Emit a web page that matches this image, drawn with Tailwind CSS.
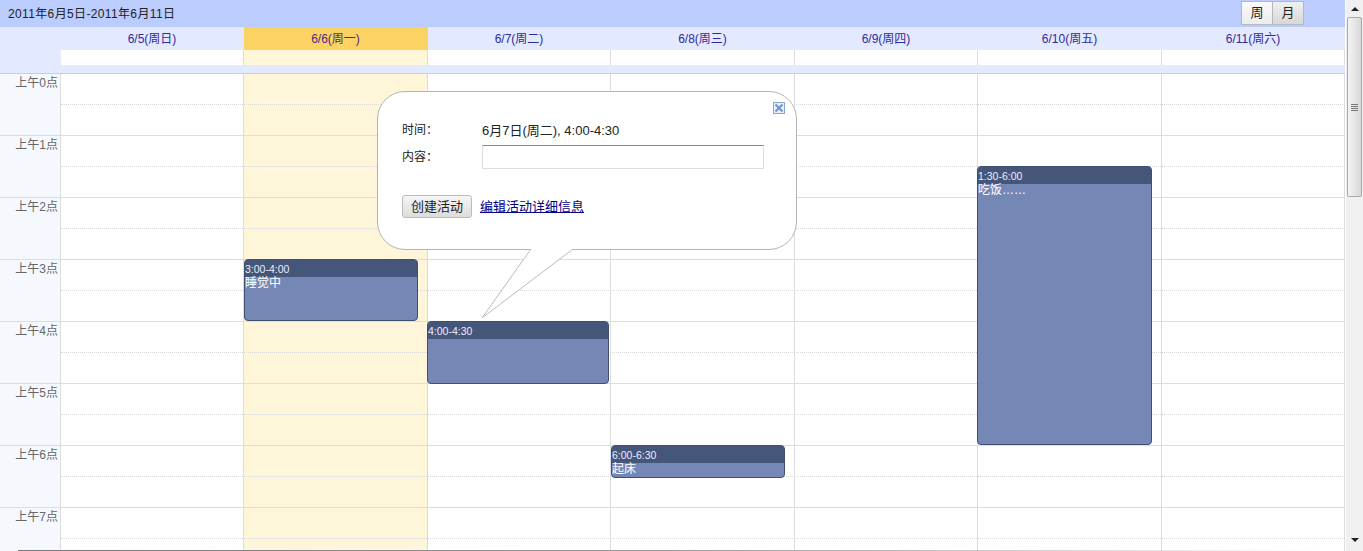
<!DOCTYPE html>
<html lang="zh-CN">
<head>
    <meta charset="UTF-8">
    <title>日历</title>
    <script src="https://cdn.jsdelivr.net/npm/@tailwindcss/browser@4"></script>
</head>
<body class="bg-white">
<div class="flex h-[551px] w-[1363px] overflow-hidden relative text-[12px] text-[#222] font-['Liberation_Sans','Noto_Sans_CJK_SC',sans-serif]">
    <main class="w-[1345px] flex flex-col">
        <!-- Toolbar -->
        <header class="h-[27px] bg-[#bbccff] flex items-center justify-between pl-2 pr-[41px]">
            <span class="tracking-[0.36px]">2011年6月5日-2011年6月11日</span>
            <div class="flex h-[24px] -mt-[2px] border border-[#b4b8c0] text-[13px]">
                <button class="w-[31px] bg-linear-to-b from-[#fafafa] to-[#ececec] border-r border-[#b4b8c0]">周</button>
                <button class="w-[30px] bg-linear-to-b from-[#f0f0f0] to-[#d8d8d8]">月</button>
            </div>
        </header>

        <!-- Day headers -->
        <div class="h-[23px] bg-[#e3e9ff] grid grid-cols-[61px_183px_184px_183px_184px_183px_184px_183px] items-stretch text-[#2f2a9c]">
            <div></div>
            <div class="flex items-center justify-center pr-px">6/5(周日)</div>
            <div class="flex items-center justify-center pr-px bg-[#fcd264] text-[#4a2a80]">6/6(周一)</div>
            <div class="flex items-center justify-center pr-px">6/7(周二)</div>
            <div class="flex items-center justify-center pr-px">6/8(周三)</div>
            <div class="flex items-center justify-center pr-px">6/9(周四)</div>
            <div class="flex items-center justify-center pr-px">6/10(周五)</div>
            <div class="flex items-center justify-center pr-px">6/11(周六)</div>
        </div>

        <!-- All day row -->
        <div class="h-[15px] bg-white grid grid-cols-[61px_183px_184px_183px_184px_183px_184px_183px]">
            <div class="bg-[#e3e9ff]"></div>
            <div class="border-r border-[#ddd]"></div>
            <div class="border-r border-[#e8dcae] bg-[#fff5d8]"></div>
            <div class="border-r border-[#ddd]"></div>
            <div class="border-r border-[#ddd]"></div>
            <div class="border-r border-[#ddd]"></div>
            <div class="border-r border-[#ddd]"></div>
            <div class="border-r border-[#ddd]"></div>
        </div>
        <div class="h-[9px] bg-[#e3e9ff] border-b border-[#c3cfe8]"></div>

        <!-- Time grid -->
        <div class="relative flex-1 overflow-hidden">
            <div class="absolute inset-0 grid grid-cols-[61px_183px_184px_183px_184px_183px_184px_183px]">
                <div class="bg-[#f5f8fc] border-r border-[#ddd]"></div>
                <div class="border-r border-[#ddd]"></div>
                <div class="border-r border-[#e8dcae] bg-[#fff5d8]"></div>
                <div class="border-r border-[#ddd]"></div>
                <div class="border-r border-[#ddd]"></div>
                <div class="border-r border-[#ddd]"></div>
                <div class="border-r border-[#ddd]"></div>
                <div class="border-r border-[#ddd]"></div>
            </div>

            <div class="relative text-[#666]">
                <div class="h-[62px] border-b border-[#ddd] flex"><div class="w-[58px] text-right leading-[19px]">上午0点</div><div class="flex-1 ml-[3px] h-[31px] border-b border-dotted border-[#d8d8d8]"></div></div>
                <div class="h-[62px] border-b border-[#ddd] flex"><div class="w-[58px] text-right leading-[19px]">上午1点</div><div class="flex-1 ml-[3px] h-[31px] border-b border-dotted border-[#d8d8d8]"></div></div>
                <div class="h-[62px] border-b border-[#ddd] flex"><div class="w-[58px] text-right leading-[19px]">上午2点</div><div class="flex-1 ml-[3px] h-[31px] border-b border-dotted border-[#d8d8d8]"></div></div>
                <div class="h-[62px] border-b border-[#ddd] flex"><div class="w-[58px] text-right leading-[19px]">上午3点</div><div class="flex-1 ml-[3px] h-[31px] border-b border-dotted border-[#d8d8d8]"></div></div>
                <div class="h-[62px] border-b border-[#ddd] flex"><div class="w-[58px] text-right leading-[19px]">上午4点</div><div class="flex-1 ml-[3px] h-[31px] border-b border-dotted border-[#d8d8d8]"></div></div>
                <div class="h-[62px] border-b border-[#ddd] flex"><div class="w-[58px] text-right leading-[19px]">上午5点</div><div class="flex-1 ml-[3px] h-[31px] border-b border-dotted border-[#d8d8d8]"></div></div>
                <div class="h-[62px] border-b border-[#ddd] flex"><div class="w-[58px] text-right leading-[19px]">上午6点</div><div class="flex-1 ml-[3px] h-[31px] border-b border-dotted border-[#d8d8d8]"></div></div>
                <div class="h-[62px] border-b border-[#ddd] flex"><div class="w-[58px] text-right leading-[19px]">上午7点</div><div class="flex-1 ml-[3px] h-[31px] border-b border-dotted border-[#d8d8d8]"></div></div>
            </div>

            <!-- Events -->
            <div class="absolute left-[244px] top-[185px] w-[174px] h-[62px] rounded-[4px] border border-[#3f4f72] bg-[#7487b5] text-white overflow-hidden">
                <div class="h-[17px] bg-[#44567a] text-[10.5px] leading-[19px] text-[#eef]">3:00-4:00</div>
                <div class="leading-[13px]">睡觉中</div>
            </div>
            <div class="absolute left-[427px] top-[247px] w-[182px] h-[63px] rounded-[4px] border border-[#3f4f72] bg-[#7487b5] text-white overflow-hidden">
                <div class="h-[17px] bg-[#44567a] text-[10.5px] leading-[19px] text-[#eef]">4:00-4:30</div>
            </div>
            <div class="absolute left-[611px] top-[371px] w-[174px] h-[33px] rounded-[4px] border border-[#3f4f72] bg-[#7487b5] text-white overflow-hidden">
                <div class="h-[17px] bg-[#44567a] text-[10.5px] leading-[19px] text-[#eef]">6:00-6:30</div>
                <div class="leading-[13px]">起床</div>
            </div>
            <div class="absolute left-[977px] top-[92px] w-[175px] h-[279px] rounded-[4px] border border-[#3f4f72] bg-[#7487b5] text-white overflow-hidden">
                <div class="h-[17px] bg-[#44567a] text-[10.5px] leading-[19px] text-[#eef]">1:30-6:00</div>
                <div class="leading-[13px]">吃饭……</div>
            </div>

            <!-- Popup bubble -->
            <div class="absolute left-[377px] top-[17px] w-[420px] h-[159px] rounded-[28px] border border-[#b4b4b4] bg-white pl-[24px] pt-[31px] text-[13px] text-[#222]">
                <svg class="absolute right-[11px] top-[10px] w-[12px] h-[12px]" viewBox="0 0 12 12">
                    <rect x="0.5" y="0.5" width="11" height="11" fill="#e8eefa" stroke="#8aa6d8"/>
                    <path d="M2.5 2.5l7 7M9.5 2.5l-7 7" stroke="#6f93d0" stroke-width="2"/>
                </svg>
                <div class="grid grid-cols-[80px_282px] items-start">
                    <div class="h-[15px] leading-[15px] text-[12px]">时间：</div>
                    <div class="h-[15px] leading-[15px]">6月7日(周二), 4:00-4:30</div>
                    <div class="mt-[9px] leading-[21px] text-[12px]">内容：</div>
                    <input class="mt-[7px] h-[24px] border border-[#ddd] border-t-[#888] bg-white" type="text">
                </div>
                <div class="flex items-center mt-[26px]">
                    <button class="w-[70px] h-[23px] rounded-[3px] border border-[#bbb] bg-linear-to-b from-[#f6f6f6] to-[#dcdcdc] text-[#222]">创建活动</button>
                    <a href="#" class="ml-2 text-[#00008b] underline">编辑活动详细信息</a>
                </div>
            </div>
            <svg class="absolute left-[470px] top-[174px] w-[110px] h-[72px]" viewBox="0 0 110 72">
                <polygon points="61,1 12,70 103,1" fill="#fff"/>
                <rect x="61" y="0" width="42" height="2" fill="#fff"/>
                <polyline points="61,1 12,70 103,1" fill="none" stroke="#bbb"/>
            </svg>
        </div>
    </main>

    <!-- Scrollbar -->
    <div class="ml-px w-[17px] bg-[#f0f0f0] flex flex-col items-center relative">
        <div class="h-[17px] flex items-center justify-center">
            <div class="w-0 h-0 border-x-[4px] border-x-transparent border-b-[4px] border-b-[#222]"></div>
        </div>
        <div class="w-[15px] h-[180px] rounded-[2px] border border-[#aaa] bg-linear-to-r from-[#f4f4f4] to-[#d8d8d8] flex flex-col items-center justify-center gap-px">
            <div class="w-[7px] h-px bg-[#777]"></div>
            <div class="w-[7px] h-px bg-[#777]"></div>
            <div class="w-[7px] h-px bg-[#777]"></div>
            <div class="w-[7px] h-px bg-[#777]"></div>
        </div>
        <div class="mt-auto h-[17px] mb-[3px] flex items-center justify-center">
            <div class="w-0 h-0 border-x-[4px] border-x-transparent border-t-[4px] border-t-[#222]"></div>
        </div>
    </div>

    <!-- Bottom edge shadow -->
    <div class="absolute left-[18px] bottom-0 w-[1305px] h-[1px] bg-linear-to-r from-[#777] via-[#999] to-transparent"></div>
</div>
</body>
</html>
